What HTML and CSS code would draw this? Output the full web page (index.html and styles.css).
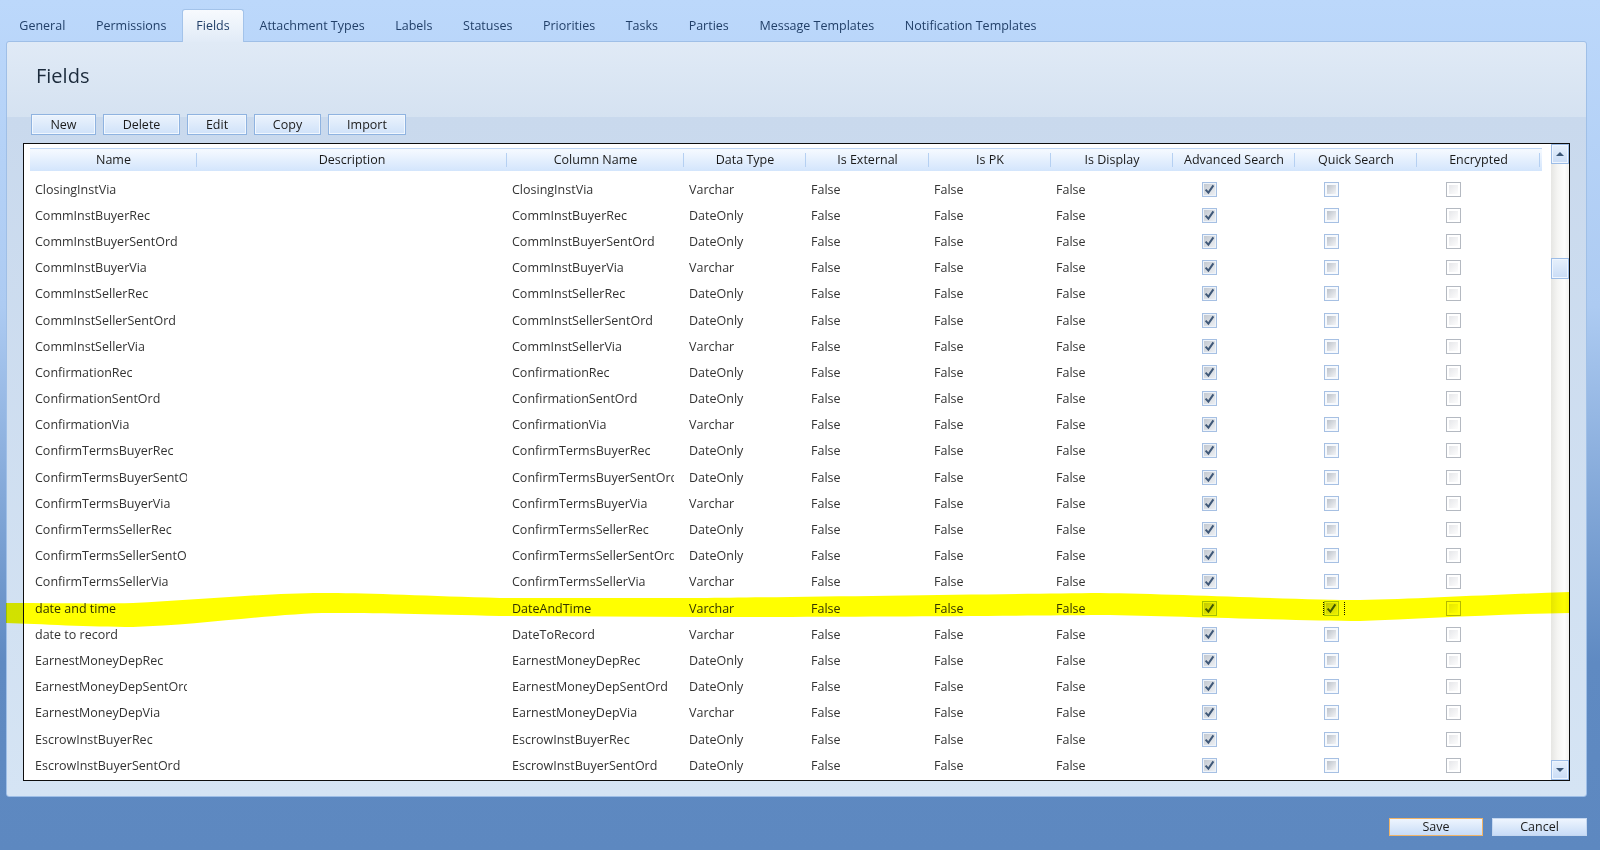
FILE: index.html
```html
<!DOCTYPE html>
<html lang="en">
<head>
    <meta charset="UTF-8">
    <title>Fields</title>
    <link rel="stylesheet" href="styles.css">
</head>
<body>
    <div class="tabs">
        <div class="tab">General</div>
        <div class="tab">Permissions</div>
        <div class="tab active">Fields</div>
        <div class="tab">Attachment Types</div>
        <div class="tab">Labels</div>
        <div class="tab">Statuses</div>
        <div class="tab">Priorities</div>
        <div class="tab">Tasks</div>
        <div class="tab">Parties</div>
        <div class="tab">Message Templates</div>
        <div class="tab">Notification Templates</div>
    </div>

    <div class="panel">
        <h1 class="panel-title">Fields</h1>
        <div class="toolbar">
            <button class="btn btn-new">New</button>
            <button class="btn btn-delete">Delete</button>
            <button class="btn btn-edit">Edit</button>
            <button class="btn btn-copy">Copy</button>
            <button class="btn btn-import">Import</button>
        </div>

        <div class="grid-box">
            <div class="grid-main">
                <div class="grid-head">
                    <div class="hcell">Name</div>
                    <div class="hcell">Description</div>
                    <div class="hcell">Column Name</div>
                    <div class="hcell">Data Type</div>
                    <div class="hcell">Is External</div>
                    <div class="hcell">Is PK</div>
                    <div class="hcell">Is Display</div>
                    <div class="hcell">Advanced Search</div>
                    <div class="hcell">Quick Search</div>
                    <div class="hcell">Encrypted</div>
                </div>
                <div class="grid-body">
                    <div class="grid-row"><div class="cell">ClosingInstVia</div><div class="cell"></div><div class="cell">ClosingInstVia</div><div class="cell">Varchar</div><div class="cell">False</div><div class="cell">False</div><div class="cell">False</div><div class="cell cb"><span class="chk chk-on"><svg class="tick" viewBox="0 0 11 11"><path d="M1.6 5.6l2.8 3 5-7.2"/></svg></span></div><div class="cell cb"><span class="chk chk-quick"></span></div><div class="cell cb"><span class="chk chk-enc"></span></div></div>
                    <div class="grid-row"><div class="cell">CommInstBuyerRec</div><div class="cell"></div><div class="cell">CommInstBuyerRec</div><div class="cell">DateOnly</div><div class="cell">False</div><div class="cell">False</div><div class="cell">False</div><div class="cell cb"><span class="chk chk-on"><svg class="tick" viewBox="0 0 11 11"><path d="M1.6 5.6l2.8 3 5-7.2"/></svg></span></div><div class="cell cb"><span class="chk chk-quick"></span></div><div class="cell cb"><span class="chk chk-enc"></span></div></div>
                    <div class="grid-row"><div class="cell">CommInstBuyerSentOrd</div><div class="cell"></div><div class="cell">CommInstBuyerSentOrd</div><div class="cell">DateOnly</div><div class="cell">False</div><div class="cell">False</div><div class="cell">False</div><div class="cell cb"><span class="chk chk-on"><svg class="tick" viewBox="0 0 11 11"><path d="M1.6 5.6l2.8 3 5-7.2"/></svg></span></div><div class="cell cb"><span class="chk chk-quick"></span></div><div class="cell cb"><span class="chk chk-enc"></span></div></div>
                    <div class="grid-row"><div class="cell">CommInstBuyerVia</div><div class="cell"></div><div class="cell">CommInstBuyerVia</div><div class="cell">Varchar</div><div class="cell">False</div><div class="cell">False</div><div class="cell">False</div><div class="cell cb"><span class="chk chk-on"><svg class="tick" viewBox="0 0 11 11"><path d="M1.6 5.6l2.8 3 5-7.2"/></svg></span></div><div class="cell cb"><span class="chk chk-quick"></span></div><div class="cell cb"><span class="chk chk-enc"></span></div></div>
                    <div class="grid-row"><div class="cell">CommInstSellerRec</div><div class="cell"></div><div class="cell">CommInstSellerRec</div><div class="cell">DateOnly</div><div class="cell">False</div><div class="cell">False</div><div class="cell">False</div><div class="cell cb"><span class="chk chk-on"><svg class="tick" viewBox="0 0 11 11"><path d="M1.6 5.6l2.8 3 5-7.2"/></svg></span></div><div class="cell cb"><span class="chk chk-quick"></span></div><div class="cell cb"><span class="chk chk-enc"></span></div></div>
                    <div class="grid-row"><div class="cell">CommInstSellerSentOrd</div><div class="cell"></div><div class="cell">CommInstSellerSentOrd</div><div class="cell">DateOnly</div><div class="cell">False</div><div class="cell">False</div><div class="cell">False</div><div class="cell cb"><span class="chk chk-on"><svg class="tick" viewBox="0 0 11 11"><path d="M1.6 5.6l2.8 3 5-7.2"/></svg></span></div><div class="cell cb"><span class="chk chk-quick"></span></div><div class="cell cb"><span class="chk chk-enc"></span></div></div>
                    <div class="grid-row"><div class="cell">CommInstSellerVia</div><div class="cell"></div><div class="cell">CommInstSellerVia</div><div class="cell">Varchar</div><div class="cell">False</div><div class="cell">False</div><div class="cell">False</div><div class="cell cb"><span class="chk chk-on"><svg class="tick" viewBox="0 0 11 11"><path d="M1.6 5.6l2.8 3 5-7.2"/></svg></span></div><div class="cell cb"><span class="chk chk-quick"></span></div><div class="cell cb"><span class="chk chk-enc"></span></div></div>
                    <div class="grid-row"><div class="cell">ConfirmationRec</div><div class="cell"></div><div class="cell">ConfirmationRec</div><div class="cell">DateOnly</div><div class="cell">False</div><div class="cell">False</div><div class="cell">False</div><div class="cell cb"><span class="chk chk-on"><svg class="tick" viewBox="0 0 11 11"><path d="M1.6 5.6l2.8 3 5-7.2"/></svg></span></div><div class="cell cb"><span class="chk chk-quick"></span></div><div class="cell cb"><span class="chk chk-enc"></span></div></div>
                    <div class="grid-row"><div class="cell">ConfirmationSentOrd</div><div class="cell"></div><div class="cell">ConfirmationSentOrd</div><div class="cell">DateOnly</div><div class="cell">False</div><div class="cell">False</div><div class="cell">False</div><div class="cell cb"><span class="chk chk-on"><svg class="tick" viewBox="0 0 11 11"><path d="M1.6 5.6l2.8 3 5-7.2"/></svg></span></div><div class="cell cb"><span class="chk chk-quick"></span></div><div class="cell cb"><span class="chk chk-enc"></span></div></div>
                    <div class="grid-row"><div class="cell">ConfirmationVia</div><div class="cell"></div><div class="cell">ConfirmationVia</div><div class="cell">Varchar</div><div class="cell">False</div><div class="cell">False</div><div class="cell">False</div><div class="cell cb"><span class="chk chk-on"><svg class="tick" viewBox="0 0 11 11"><path d="M1.6 5.6l2.8 3 5-7.2"/></svg></span></div><div class="cell cb"><span class="chk chk-quick"></span></div><div class="cell cb"><span class="chk chk-enc"></span></div></div>
                    <div class="grid-row"><div class="cell">ConfirmTermsBuyerRec</div><div class="cell"></div><div class="cell">ConfirmTermsBuyerRec</div><div class="cell">DateOnly</div><div class="cell">False</div><div class="cell">False</div><div class="cell">False</div><div class="cell cb"><span class="chk chk-on"><svg class="tick" viewBox="0 0 11 11"><path d="M1.6 5.6l2.8 3 5-7.2"/></svg></span></div><div class="cell cb"><span class="chk chk-quick"></span></div><div class="cell cb"><span class="chk chk-enc"></span></div></div>
                    <div class="grid-row"><div class="cell">ConfirmTermsBuyerSentOrd</div><div class="cell"></div><div class="cell">ConfirmTermsBuyerSentOrd</div><div class="cell">DateOnly</div><div class="cell">False</div><div class="cell">False</div><div class="cell">False</div><div class="cell cb"><span class="chk chk-on"><svg class="tick" viewBox="0 0 11 11"><path d="M1.6 5.6l2.8 3 5-7.2"/></svg></span></div><div class="cell cb"><span class="chk chk-quick"></span></div><div class="cell cb"><span class="chk chk-enc"></span></div></div>
                    <div class="grid-row"><div class="cell">ConfirmTermsBuyerVia</div><div class="cell"></div><div class="cell">ConfirmTermsBuyerVia</div><div class="cell">Varchar</div><div class="cell">False</div><div class="cell">False</div><div class="cell">False</div><div class="cell cb"><span class="chk chk-on"><svg class="tick" viewBox="0 0 11 11"><path d="M1.6 5.6l2.8 3 5-7.2"/></svg></span></div><div class="cell cb"><span class="chk chk-quick"></span></div><div class="cell cb"><span class="chk chk-enc"></span></div></div>
                    <div class="grid-row"><div class="cell">ConfirmTermsSellerRec</div><div class="cell"></div><div class="cell">ConfirmTermsSellerRec</div><div class="cell">DateOnly</div><div class="cell">False</div><div class="cell">False</div><div class="cell">False</div><div class="cell cb"><span class="chk chk-on"><svg class="tick" viewBox="0 0 11 11"><path d="M1.6 5.6l2.8 3 5-7.2"/></svg></span></div><div class="cell cb"><span class="chk chk-quick"></span></div><div class="cell cb"><span class="chk chk-enc"></span></div></div>
                    <div class="grid-row"><div class="cell">ConfirmTermsSellerSentOrd</div><div class="cell"></div><div class="cell">ConfirmTermsSellerSentOrd</div><div class="cell">DateOnly</div><div class="cell">False</div><div class="cell">False</div><div class="cell">False</div><div class="cell cb"><span class="chk chk-on"><svg class="tick" viewBox="0 0 11 11"><path d="M1.6 5.6l2.8 3 5-7.2"/></svg></span></div><div class="cell cb"><span class="chk chk-quick"></span></div><div class="cell cb"><span class="chk chk-enc"></span></div></div>
                    <div class="grid-row"><div class="cell">ConfirmTermsSellerVia</div><div class="cell"></div><div class="cell">ConfirmTermsSellerVia</div><div class="cell">Varchar</div><div class="cell">False</div><div class="cell">False</div><div class="cell">False</div><div class="cell cb"><span class="chk chk-on"><svg class="tick" viewBox="0 0 11 11"><path d="M1.6 5.6l2.8 3 5-7.2"/></svg></span></div><div class="cell cb"><span class="chk chk-quick"></span></div><div class="cell cb"><span class="chk chk-enc"></span></div></div>
                    <div class="grid-row"><div class="cell">date and time</div><div class="cell"></div><div class="cell">DateAndTime</div><div class="cell">Varchar</div><div class="cell">False</div><div class="cell">False</div><div class="cell">False</div><div class="cell cb"><span class="chk chk-on"><svg class="tick" viewBox="0 0 11 11"><path d="M1.6 5.6l2.8 3 5-7.2"/></svg></span></div><div class="cell cb"><span class="focus"><span class="chk chk-on"><svg class="tick" viewBox="0 0 11 11"><path d="M1.6 5.6l2.8 3 5-7.2"/></svg></span></span></div><div class="cell cb"><span class="chk chk-enc"></span></div></div>
                    <div class="grid-row"><div class="cell">date to record</div><div class="cell"></div><div class="cell">DateToRecord</div><div class="cell">Varchar</div><div class="cell">False</div><div class="cell">False</div><div class="cell">False</div><div class="cell cb"><span class="chk chk-on"><svg class="tick" viewBox="0 0 11 11"><path d="M1.6 5.6l2.8 3 5-7.2"/></svg></span></div><div class="cell cb"><span class="chk chk-quick"></span></div><div class="cell cb"><span class="chk chk-enc"></span></div></div>
                    <div class="grid-row"><div class="cell">EarnestMoneyDepRec</div><div class="cell"></div><div class="cell">EarnestMoneyDepRec</div><div class="cell">DateOnly</div><div class="cell">False</div><div class="cell">False</div><div class="cell">False</div><div class="cell cb"><span class="chk chk-on"><svg class="tick" viewBox="0 0 11 11"><path d="M1.6 5.6l2.8 3 5-7.2"/></svg></span></div><div class="cell cb"><span class="chk chk-quick"></span></div><div class="cell cb"><span class="chk chk-enc"></span></div></div>
                    <div class="grid-row"><div class="cell">EarnestMoneyDepSentOrd</div><div class="cell"></div><div class="cell">EarnestMoneyDepSentOrd</div><div class="cell">DateOnly</div><div class="cell">False</div><div class="cell">False</div><div class="cell">False</div><div class="cell cb"><span class="chk chk-on"><svg class="tick" viewBox="0 0 11 11"><path d="M1.6 5.6l2.8 3 5-7.2"/></svg></span></div><div class="cell cb"><span class="chk chk-quick"></span></div><div class="cell cb"><span class="chk chk-enc"></span></div></div>
                    <div class="grid-row"><div class="cell">EarnestMoneyDepVia</div><div class="cell"></div><div class="cell">EarnestMoneyDepVia</div><div class="cell">Varchar</div><div class="cell">False</div><div class="cell">False</div><div class="cell">False</div><div class="cell cb"><span class="chk chk-on"><svg class="tick" viewBox="0 0 11 11"><path d="M1.6 5.6l2.8 3 5-7.2"/></svg></span></div><div class="cell cb"><span class="chk chk-quick"></span></div><div class="cell cb"><span class="chk chk-enc"></span></div></div>
                    <div class="grid-row"><div class="cell">EscrowInstBuyerRec</div><div class="cell"></div><div class="cell">EscrowInstBuyerRec</div><div class="cell">DateOnly</div><div class="cell">False</div><div class="cell">False</div><div class="cell">False</div><div class="cell cb"><span class="chk chk-on"><svg class="tick" viewBox="0 0 11 11"><path d="M1.6 5.6l2.8 3 5-7.2"/></svg></span></div><div class="cell cb"><span class="chk chk-quick"></span></div><div class="cell cb"><span class="chk chk-enc"></span></div></div>
                    <div class="grid-row"><div class="cell">EscrowInstBuyerSentOrd</div><div class="cell"></div><div class="cell">EscrowInstBuyerSentOrd</div><div class="cell">DateOnly</div><div class="cell">False</div><div class="cell">False</div><div class="cell">False</div><div class="cell cb"><span class="chk chk-on"><svg class="tick" viewBox="0 0 11 11"><path d="M1.6 5.6l2.8 3 5-7.2"/></svg></span></div><div class="cell cb"><span class="chk chk-quick"></span></div><div class="cell cb"><span class="chk chk-enc"></span></div></div>
                </div>
            </div>
            <div class="vscroll">
                <div class="sb-btn"><span class="arrow-up"></span></div>
                <div class="sb-track"><div class="sb-thumb"></div></div>
                <div class="sb-btn"><span class="arrow-down"></span></div>
            </div>
        </div>
    </div>

    <div class="actions">
        <button class="btn-action btn-save">Save</button>
        <button class="btn-action">Cancel</button>
    </div>

    <!-- marker highlight over the "date and time" row -->
    <svg class="marker" width="1600" height="850" viewBox="0 0 1600 850">
        <path d="M6 603 C60 603 100 604 133 603 C200 600 280 592 330 593 C370 593 430 596 500 598 L700 598 C800 597 1000 594 1100 593 C1180 594 1300 600 1360 600 C1420 599 1500 594 1570 592 L1570 613 C1500 614 1420 619 1360 621 C1300 621 1180 616 1100 615 C1000 616 800 617 700 617 L500 616 C430 614 370 613 330 613 C280 613 200 625 133 627 C90 627 40 624 6 623 Z" fill="#ffff00"/>
    </svg>
</body>
</html>
```

FILE: styles.css
```css
body {
    margin: 0;
    height: 850px;
    overflow: hidden;
    position: relative;
    font-family: "Open Sans", "Liberation Sans", sans-serif;
    font-size: 12.5px;
    background: linear-gradient(#bcd8fb 0%, #adcbf2 36%, #5f8ac2 78%, #5d88c0 100%);
}

/* tab strip */
.tabs {
    display: flex;
    align-items: flex-end;
    height: 41px;
    padding-left: 4px;
}
.tab {
    height: 32px;
    line-height: 34px;
    padding: 0 15.3px;
    color: #213f68;
    box-sizing: border-box;
}
.tab.active {
    position: relative;
    z-index: 1;
    height: 33px;
    line-height: 32px;
    margin-bottom: -1px;
    padding: 0 13.5px;
    background: linear-gradient(#f7fafe, #e1ebf7);
    border: 1px solid #a3c3ea;
    border-bottom: none;
    border-radius: 3px 3px 0 0;
}

/* main panel */
.panel {
    margin: 0 13px 0 6px;
    height: 756px;
    box-sizing: border-box;
    border: 1px solid #9fbfe7;
    border-radius: 3px;
    background: linear-gradient(#e0eaf6 0, #d5e2f1 75px, #c9d9ed 75px, #d5e4f4 100%);
    padding: 0 16px 15px 16px;
    display: flex;
    flex-direction: column;
}
.panel-title {
    margin: 22px 0 0 13px;
    font-size: 20px;
    line-height: 24px;
    font-weight: normal;
    color: #1c2b3c;
}

.toolbar {
    display: flex;
    gap: 7px;
    margin: 26px 0 0 8px;
}
.btn {
    height: 21px;
    padding: 0;
    font-family: inherit;
    font-size: 12.5px;
    color: #1b1b1b;
    border: 1px solid #8fb3e0;
    background: linear-gradient(#ebf3fd, #d0e2f9);
    box-shadow: inset 0 0 0 1px #f1f7fe;
}
.btn-new { width: 65px; }
.btn-delete { width: 77px; }
.btn-edit { width: 60px; }
.btn-copy { width: 67px; }
.btn-import { width: 78px; }

/* grid */
.grid-box {
    flex: 1;
    display: flex;
    margin-top: 8px;
    border: 1px solid #0e0e0e;
    background: #fff;
    min-height: 0;
}
.grid-main {
    flex: 1;
    padding: 4px 0 0 6px;
    overflow: hidden;
}
.grid-head,
.grid-row {
    display: grid;
    grid-template-columns: 167px 310px 177px 122px 123px 122px 122px 122px 122px 123px;
}
.grid-head {
    width: 1512px;
    height: 23px;
    box-sizing: border-box;
    border-top: 1px solid #c0d8f6;
    background: linear-gradient(#f6faff, #d3e5fc);
}
.hcell {
    text-align: center;
    line-height: 22px;
    color: #1a1a1a;
    background: linear-gradient(#b5d0f2, #b5d0f2) right center / 1px 14px no-repeat;
}
.grid-body {
    margin-top: 5px;
}
.grid-row {
    height: 26.2px;
    align-items: center;
}
.cell {
    padding-left: 5px;
    margin-right: 10px;
    white-space: nowrap;
    overflow: hidden;
    color: #333;
}
.cell.cb {
    padding-left: 29px;
    margin-right: 0;
    display: flex;
}

/* checkboxes */
.chk {
    display: block;
    width: 15px;
    height: 15px;
    box-sizing: border-box;
    padding: 2px;
    border: 1px solid #a6c0e3;
}
.chk-on {
    padding: 1px;
    background: linear-gradient(135deg, #c3c9d1, #eceff3) content-box, #eef3f9;
}
.chk-quick {
    background: linear-gradient(135deg, #bcc2ca, #f3f4f6) content-box, #f6f9fd;
}
.chk-enc {
    border-color: #b4b9c1;
    background: linear-gradient(135deg, #e6e7ea, #fdfdfd) content-box, #fff;
}
.tick {
    display: block;
    width: 11px;
    height: 11px;
    fill: none;
    stroke: #3f5878;
    stroke-width: 2;
}
.focus {
    display: block;
    width: 20px;
    height: 15px;
    outline: 1px dotted #111;
}

/* scrollbar */
.vscroll {
    width: 18px;
    display: flex;
    flex-direction: column;
    background: linear-gradient(to right, #e6e6e3, #f4f4f2 35%, #fdfdfd 75%, #f1f1ef);
}
.sb-btn,
.sb-thumb {
    height: 20px;
    box-sizing: border-box;
    border: 1px solid #9cbce6;
    background: linear-gradient(#e6f0fc, #c9dcf6);
    box-shadow: inset 0 0 0 1px #eef5fe;
    display: flex;
    align-items: center;
    justify-content: center;
}
.sb-track {
    flex: 1;
}
.sb-thumb {
    margin-top: 94px;
    height: 21px;
}
.arrow-up {
    border-left: 4px solid transparent;
    border-right: 4px solid transparent;
    border-bottom: 4px solid #3b5676;
}
.arrow-down {
    border-left: 4px solid transparent;
    border-right: 4px solid transparent;
    border-top: 4px solid #3b5676;
}

/* bottom buttons */
.actions {
    display: flex;
    justify-content: flex-end;
    gap: 9px;
    margin: 21px 13px 0 0;
}
.btn-action {
    width: 95px;
    height: 18px;
    padding: 0;
    font-family: inherit;
    font-size: 12.5px;
    line-height: 14px;
    color: #1b1b1b;
    border: 1px solid #c4d7f0;
    background: linear-gradient(#eef5fe, #c8dcf7);
}
.btn-save {
    width: 94px;
    border-color: #f0b468;
}

.marker {
    position: absolute;
    left: 0;
    top: 0;
    pointer-events: none;
    mix-blend-mode: multiply;
}
```
